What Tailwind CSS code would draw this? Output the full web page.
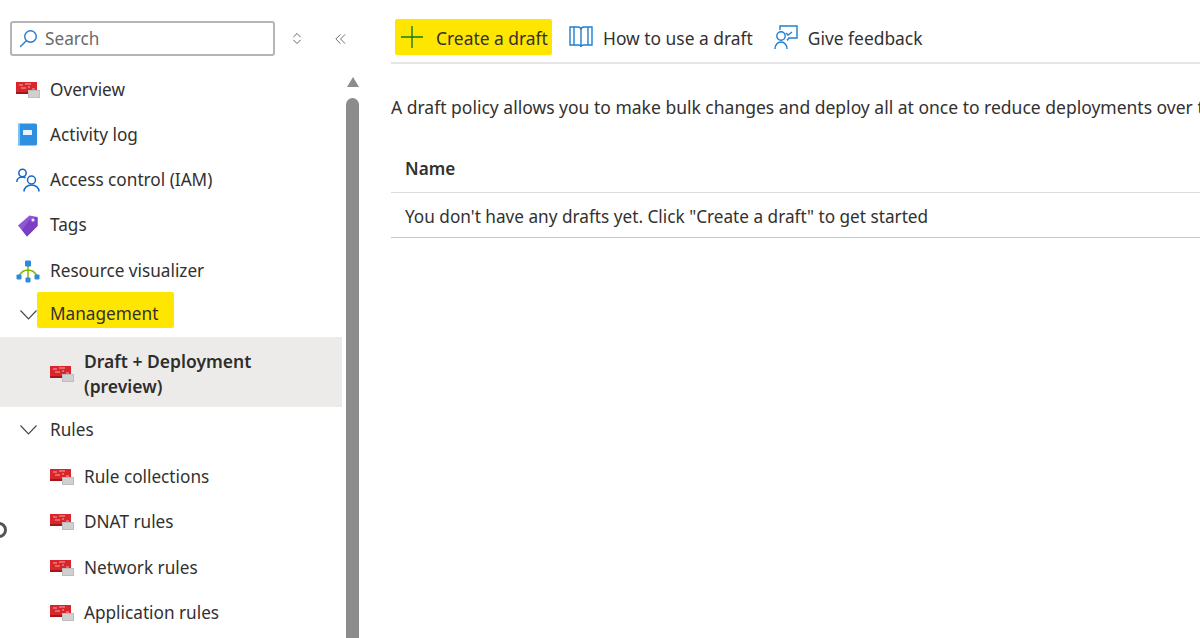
<!doctype html>
<html>
<head>
  <meta charset="UTF-8">
  <script src="https://cdn.jsdelivr.net/npm/@tailwindcss/browser@4"></script>
</head>
<body class="bg-white overflow-hidden">
  <svg class="hidden">
    <symbol id="fw" viewBox="0 0 24 16">
      <rect x="0" y="0" width="21" height="10" fill="#d8262c"/>
      <rect x="0" y="10" width="15" height="2" fill="#a3161c"/>
      <path d="M3 3h4M9 2h6M5 6h5M12 5h2M16 7h3" stroke="#f3a6a8" stroke-width="1.2"/>
      <rect x="12" y="8" width="12" height="8" fill="#bdbdbd"/>
      <path d="M13 10h10M13 12h10M13 14h10" stroke="#eeeeee" stroke-width="0.8"/>
    </symbol>
  </svg>

  <div class="relative flex h-[638px] w-[1200px] overflow-hidden font-['Noto_Sans',sans-serif] text-[17.2px] text-[#323130]">
    <!-- clipped circle on the left edge -->
    <div class="absolute left-[-9px] top-[522px] h-4 w-4 rounded-full border-[3px] border-[#555]"></div>

    <!-- sidebar -->
    <aside class="flex h-full w-[342px] shrink-0 flex-col">
      <div class="flex h-[67px] shrink-0 items-start pl-[10px] pt-[21px]">
        <div class="flex h-[35px] w-[265px] shrink-0 items-center rounded-[3px] border-2 border-[#b5b5b5] pl-[7px] text-[#6b6b6b]">
          <svg class="h-[19px] w-[19px] text-[#2b79c9]" viewBox="0 0 19 19" fill="none" stroke="currentColor" stroke-width="1.4"><circle cx="11.5" cy="7.5" r="5.8"/><path d="M7.3 11.7 1.5 17.5" stroke-linecap="round"/></svg>
          <span class="ml-[7px]">Search</span>
        </div>
        <svg class="ml-[17px] mt-[11px] h-[13px] w-[10px] shrink-0 text-[#666]" viewBox="0 0 11 13" fill="none" stroke="currentColor" stroke-width="1.1"><path d="M5.5 1 9.5 5M5.5 1 1.5 5M5.5 12 9.5 8M5.5 12 1.5 8"/></svg>
        <svg class="ml-[33px] mt-[12px] h-[12px] w-[11px] shrink-0 text-[#666]" viewBox="0 0 13 13" fill="none" stroke="currentColor" stroke-width="1.1"><path d="M6.5 1 1 6.5 6.5 12M12 1 6.5 6.5 12 12"/></svg>
      </div>

      <nav class="flex flex-col">
        <a class="flex h-[45px] items-center pl-4">
          <svg class="h-4 w-6"><use href="#fw"/></svg>
          <span class="ml-[10px]">Overview</span>
        </a>
        <a class="flex h-[45px] items-center pl-4">
          <svg class="h-[23px] w-6" viewBox="0 0 24 23"><rect x="2" y="0.5" width="19" height="22" rx="1.5" fill="#2f8fe0"/><rect x="2" y="0.5" width="2" height="22" fill="#7cc2f5"/><rect x="7" y="7" width="9" height="5" rx="0.5" fill="#e8f4fd"/></svg>
          <span class="ml-[10px]">Activity log</span>
        </a>
        <a class="flex h-[45px] items-center pl-4">
          <svg class="h-6 w-6 text-[#1668c4]" viewBox="0 0 24 24" fill="none" stroke="currentColor" stroke-width="1.5"><circle cx="6.5" cy="5" r="3.7"/><path d="M0.8 14c0-3 2.4-5 5.5-5 1.3 0 2.3.3 3.2.9"/><circle cx="15.5" cy="12" r="4"/><path d="M8 23.5c0-3.8 3.2-6.5 7.5-6.5s7.5 2.7 7.5 6.5"/></svg>
          <span class="ml-[10px]">Access control (IAM)</span>
        </a>
        <a class="flex h-[46px] items-center pl-4">
          <svg class="h-[23px] w-6" viewBox="0 0 24 23"><path d="M2 11.5 13.5 1.5 21.5 3 21.5 12 11 22.5Z" fill="#8e55d6"/><path d="M6 16 13.5 6 21.5 3 21.5 12 11 22.5Z" fill="#7a3fc2"/><circle cx="17" cy="6" r="1.6" fill="#f1e8fb"/></svg>
          <span class="ml-[10px]">Tags</span>
        </a>
        <a class="flex h-[44px] items-center pl-4 pt-[2px]">
          <svg class="h-[23px] w-6" viewBox="0 0 24 23" fill="none"><path d="M12 6v14M3 16c2-4 5-6 9-6s7 2 9 6" stroke="#7fba00" stroke-width="1.5"/><rect x="9" y="0.5" width="6" height="6" rx="1" fill="#2b8ae0"/><rect x="0.5" y="14.5" width="5" height="5" rx="1" fill="#2b8ae0"/><rect x="9.5" y="17.5" width="5" height="5" rx="1" fill="#2b8ae0"/><rect x="18.5" y="14.5" width="5" height="5" rx="1" fill="#2b8ae0"/></svg>
          <span class="ml-[10px]">Resource visualizer</span>
        </a>

        <!-- Management: highlight is the row label's own background -->
        <div class="flex h-[45px] items-center pl-[20px]">
          <svg class="h-[10px] w-[17px] text-[#444]" viewBox="0 0 17 10" fill="none" stroke="currentColor" stroke-width="1.1"><path d="M0.5 0.5 8.5 9 16.5 0.5"/></svg>
          <span class="flex h-[36px] w-[137px] items-center self-start rounded-[2px] bg-[#ffe600] pl-[13px] pt-[8px]">Management</span>
        </div>
        <a class="flex h-[70px] items-center bg-[#edebe9] pl-[50px] pt-[4px] text-[17.5px] font-semibold leading-[25px] text-[#2f2e2d]">
          <svg class="h-4 w-6 shrink-0"><use href="#fw"/></svg>
          <span class="ml-[10px]">Draft + Deployment<br>(preview)</span>
        </a>
        <div class="flex h-[46px] items-center pl-[20px]">
          <svg class="h-[10px] w-[17px] text-[#444]" viewBox="0 0 17 10" fill="none" stroke="currentColor" stroke-width="1.1"><path d="M0.5 0.5 8.5 9 16.5 0.5"/></svg>
          <span class="ml-[13px]">Rules</span>
        </div>
        <a class="flex h-[46px] items-center pl-[50px] pt-[2px]"><svg class="h-4 w-6"><use href="#fw"/></svg><span class="ml-[10px]">Rule collections</span></a>
        <a class="flex h-[46px] items-center pl-[50px]"><svg class="h-4 w-6"><use href="#fw"/></svg><span class="ml-[10px]">DNAT rules</span></a>
        <a class="flex h-[45px] items-center pl-[50px]"><svg class="h-4 w-6"><use href="#fw"/></svg><span class="ml-[10px]">Network rules</span></a>
        <a class="flex h-[45px] items-center pl-[50px]"><svg class="h-4 w-6"><use href="#fw"/></svg><span class="ml-[10px]">Application rules</span></a>
      </nav>
    </aside>

    <!-- scrollbar -->
    <div class="ml-1 flex w-[13px] shrink-0 flex-col items-center pt-[77px]">
      <div class="h-0 w-0 border-x-[6.5px] border-b-[10px] border-x-transparent border-b-[#8c8c8c]"></div>
      <div class="mt-[11px] w-full flex-1 rounded-t-full bg-[#8c8c8c]"></div>
    </div>

    <!-- main -->
    <main class="ml-[32px] flex-1 overflow-hidden whitespace-nowrap">
      <div class="-ml-[1px] flex h-[64px] items-start border-b-2 border-[#e6e6e6] pt-[19px] text-[17.4px]">
        <a class="ml-[5px] flex h-[36px] w-[157px] items-center rounded-[2px] bg-[#ffe600] pl-[6px]">
          <svg class="h-[22px] w-[22px] text-[#107c10]" viewBox="0 0 22 22" fill="none" stroke="currentColor" stroke-width="1.4"><path d="M11 0v22M0 11h22"/></svg>
          <span class="ml-[13px] pt-[2px]">Create a draft</span>
        </a>
        <a class="ml-[17px] flex h-[36px] items-center">
          <svg class="h-[24px] w-[24px] text-[#1f7fd1]" viewBox="0 0 24 24" fill="none" stroke="currentColor" stroke-width="1.4"><path d="M1 2h8q3 0 3 3v17q0-2-3-2H1ZM23 2h-8q-3 0-3 3v17q0-2 3-2h8Z"/><path d="M5 2v18M19 2v18"/></svg>
          <span class="ml-[10px] pt-[2px]">How to use a draft</span>
        </a>
        <a class="ml-[21px] flex h-[36px] items-center">
          <svg class="h-[25px] w-[24px] text-[#1f7fd1]" viewBox="0 0 24 25" fill="none" stroke="currentColor" stroke-width="1.4"><path d="M6 5V1h17v12h-8l-2 2.5"/><circle cx="7" cy="11" r="4.2"/><path d="M1 24c0-4 2.5-7 6-7s6 3 6 7M12 8l2 2 4-3"/></svg>
          <span class="ml-[10px] pt-[2px]">Give feedback</span>
        </a>
      </div>

      <p class="mt-[31px] h-[24px] text-[17.5px] leading-[24px]">A draft policy allows you to make bulk changes and deploy all at once to reduce deployments over time.</p>

      <div class="-ml-[1px] mt-[24px]">
        <div class="flex h-[50px] items-center border-b border-[#dcdcdc] pl-[15px] pt-[2px] font-semibold">Name</div>
        <div class="flex h-[45px] items-center border-b border-[#c8c8c8] pl-[15px] pt-[3px]">You don't have any drafts yet. Click "Create a draft" to get started</div>
      </div>
    </main>
  </div>
</body>
</html>
